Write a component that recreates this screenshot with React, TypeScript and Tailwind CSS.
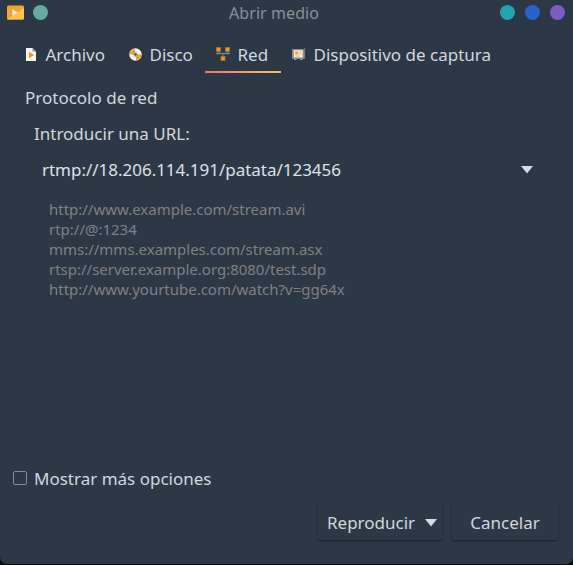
import React from "react";

function FileIcon() {
  return (
    <svg className="ml-0.5" width="10" height="13" viewBox="0 0 10 13">
      <path d="M0 0H6.5L10 3.5V13H0Z" fill="#f7f5f2" />
      <path d="M6.5 0V3.5H10Z" fill="#8d9298" />
      <path d="M3 3.7L8 7L3 10.3Z" fill="#f7930f" />
    </svg>
  );
}

function DiscIcon() {
  return (
    <svg className="ml-px" width="13" height="13" viewBox="0 0 13 13">
      <circle cx="6.5" cy="6.5" r="6.2" fill="#f4f2ef" />
      <path d="M6.5 6.5L0.9 6.6A5.6 5.6 0 0 1 5.9 0.9Z" fill="#f29a24" />
      <path d="M6.5 6.5L12.1 6.4A5.6 5.6 0 0 1 7.1 12.1Z" fill="#f29a24" />
      <circle cx="6.5" cy="6.5" r="2.2" fill="#a9a9a6" />
      <circle cx="6.5" cy="6.5" r="1.1" fill="#40464d" />
    </svg>
  );
}

function NetworkIcon() {
  return (
    <svg width="14" height="14" viewBox="0 0 14 14">
      <path d="M2.5 4V7M11.5 4V7M7 7V10" stroke="#777979" strokeWidth="1" />
      <path d="M0 6.5H14" stroke="#858583" strokeWidth="1.4" />
      <rect x="0" y="0" width="5" height="5" fill="#77664c" />
      <rect x="9" y="0" width="5" height="5" fill="#77664c" />
      <rect x="4.5" y="9" width="5" height="5" fill="#77664c" />
      <rect x="0.7" y="0.7" width="3.6" height="3.6" fill="#ff9200" />
      <rect x="9.7" y="0.7" width="3.6" height="3.6" fill="#ff9200" />
      <rect x="5.2" y="9.6" width="3.6" height="3.6" fill="#ff9200" />
    </svg>
  );
}

function CaptureIcon() {
  return (
    <svg width="14" height="13" viewBox="0 0 14 13">
      <path d="M11 3L13.5 0.5M12.5 3V11" stroke="#737577" strokeWidth="1.2" />
      <rect x="0" y="1" width="12.5" height="10" fill="#85878a" />
      <rect x="1.8" y="2.2" width="8.9" height="7.3" fill="#f8f4ed" />
      <rect x="3" y="3.4" width="3.5" height="3.1" fill="#f5a12b" />
      <path d="M7.2 3.9H9.7M7.2 5.9H9.7M3 8H8" stroke="#dfa14f" strokeWidth="0.8" />
      <path d="M2 11.5H4.5M8 11.5H10.5" stroke="#9a9a98" />
    </svg>
  );
}

function DownArrow({ className = "" }: { className?: string }) {
  return (
    <svg className={className} width="12" height="8" viewBox="0 0 12 8">
      <path d="M0 0H12L6 7.6Z" fill="#d5dde0" />
    </svg>
  );
}

function Tab({ icon, label, className, active = false }: {
  icon: React.ReactNode; label: string; className: string; active?: boolean;
}) {
  return (
    <button className={`flex h-9 flex-col ${className}`}>
      <span className="flex h-[34px] w-full items-center pl-[11px]">
        <span className="flex w-[21.5px] shrink-0 items-center">{icon}</span>
        <span className="pt-0.5 whitespace-nowrap">{label}</span>
      </span>
      {active && <span className="h-0.5 w-full bg-linear-to-r from-[#f56f68] to-[#fdbd5b]" />}
    </button>
  );
}

const examples = [
  "http://www.example.com/stream.avi",
  "rtp://@:1234",
  "mms://mms.examples.com/stream.asx",
  "rtsp://server.example.org:8080/test.sdp",
  "http://www.yourtube.com/watch?v=gg64x",
];

export default function App() {
  return (
    <div className="h-[565px] w-[573px] bg-[#080b0f]">
      <div className="flex h-[564px] flex-col overflow-hidden rounded-b-[7px] bg-[#2d3846] font-['Noto_Sans',sans-serif] text-[17px] leading-6 text-[#d0d7dd]">
        <header className="flex h-[25px] shrink-0 items-center pr-2 pl-[7px]">
          <div className="flex w-[222px] items-center gap-[9px]">
            <svg width="17" height="15" viewBox="0 0 17 15">
              <rect y="0.5" width="17" height="14" rx="1.5" fill="#f2a431" />
              <path d="M0 14.5L17 3V13Q17 14.5 15.5 14.5Z" fill="#ffc255" />
              <path d="M5.3 4.3L10.5 7.5L5.3 10.7Z" fill="#fff7e8" />
            </svg>
            <span className="size-[15px] rounded-full bg-[#67a9a7]" />
          </div>
          <h1 className="text-[16px] tracking-[0.08px] text-[#8a9096]">Abrir medio</h1>
          <div className="ml-auto flex gap-2.5">
            <span className="size-[15px] rounded-full bg-[#21a5b2]" />
            <span className="size-[15px] rounded-full bg-[#2762cf]" />
            <span className="size-[15px] rounded-full bg-[#7e5bc5]" />
          </div>
        </header>
        <nav className="mt-3 flex shrink-0 pl-[13px]">
          <Tab icon={<FileIcon />} label="Archivo" className="w-[104px]" />
          <Tab icon={<DiscIcon />} label="Disco" className="w-[88px]" />
          <Tab icon={<NetworkIcon />} label="Red" className="w-[76px]" active />
          <Tab icon={<CaptureIcon />} label="Dispositivo de captura" className="w-[222px]" />
        </nav>
        <main className="flex flex-1 flex-col pt-[13px] pl-[25px]">
          <h2>Protocolo de red</h2>
          <label className="mt-3 pl-[9px]">Introducir una URL:</label>
          <div className="mt-3 flex items-center justify-between pr-[40px] pl-[17px] text-[#dbe2e7]">
            <span className="tracking-[-0.02px]">rtmp://18.206.114.191/patata/123456</span>
            <DownArrow />
          </div>
          <ul className="mt-[17px] pl-6 text-[15px] leading-5 tracking-[-0.01px] text-[#7f8081]">
            {examples.map((url) => <li key={url}>{url}</li>)}
          </ul>
        </main>
        <label className="flex h-6 shrink-0 items-center gap-[7px] pl-[13px]">
          <span className="mb-[2px] size-[14px] rounded-[2px] border-[1.5px] border-[#829092]" />
          <span>Mostrar más opciones</span>
        </label>
        <footer className="mt-3 mb-6 flex h-[37px] shrink-0 justify-end gap-[10px] pr-[15px]">
          <button className="flex w-[124px] items-center rounded-[2px] pl-[9px] shadow-[0_1px_2px_#19212b]">
            <span className="w-[98px] pt-[3px] text-left">Reproducir</span>
            <DownArrow className="mt-[3px]" />
          </button>
          <button className="w-[106px] rounded-[2px] pt-[3px] shadow-[0_1px_2px_#19212b]">Cancelar</button>
        </footer>
      </div>
    </div>
  );
}
